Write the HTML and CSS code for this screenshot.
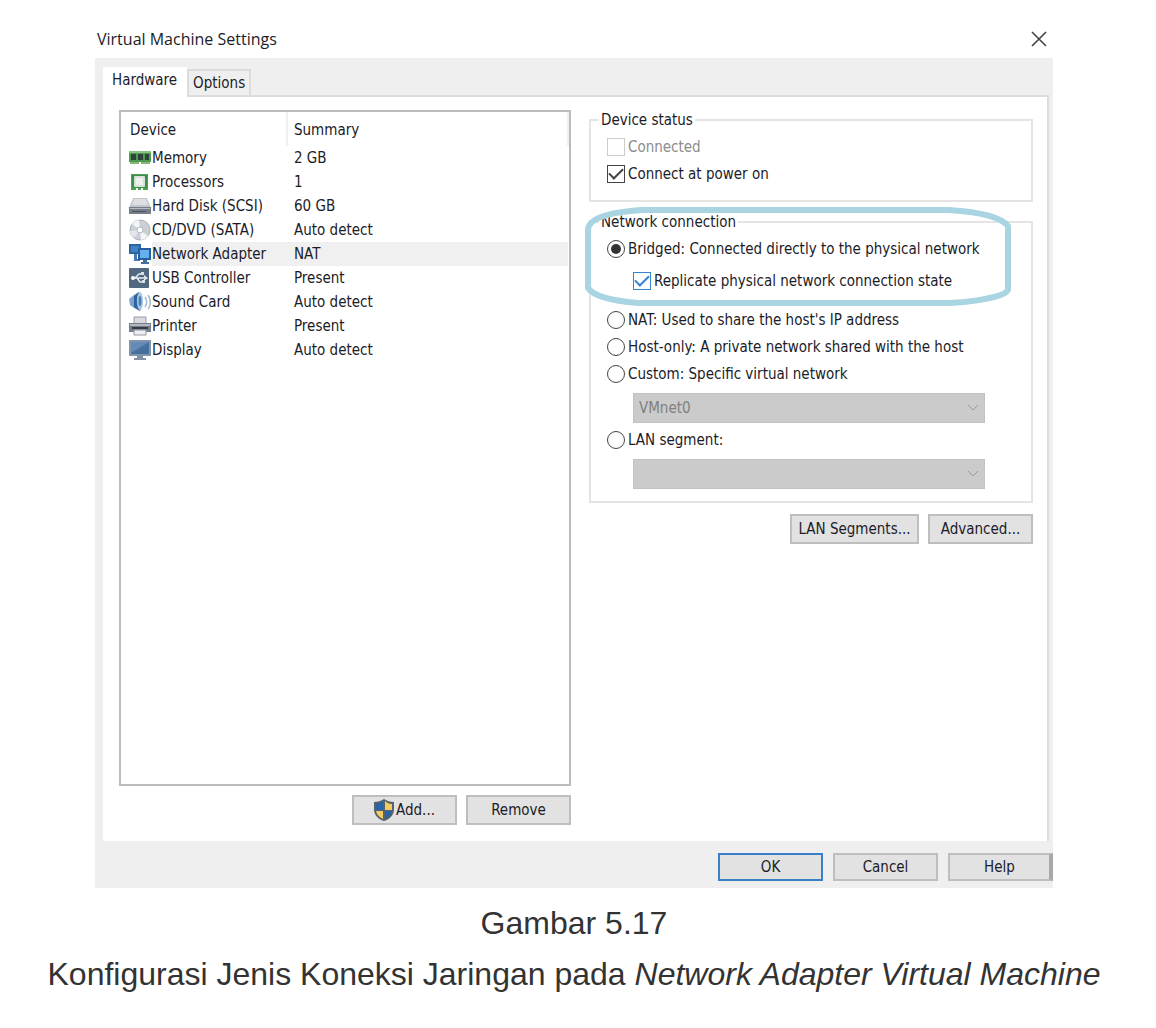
FILE: index.html
```html
<!DOCTYPE html>
<html lang="id">
<head>
<meta charset="utf-8">
<title>Gambar 5.17</title>
<link rel="stylesheet" href="styles.css">
</head>
<body>
<figure class="figure">
  <section class="dialog" aria-labelledby="dialog-title">
    <header class="titlebar">
      <h1 class="title" id="dialog-title">Virtual Machine Settings</h1>
      <button class="close" type="button" aria-label="Close">
        <svg width="16" height="16" viewBox="0 0 16 16"><path d="M1 1 15 15M15 1 1 15" stroke="#444" stroke-width="1.6" fill="none"/></svg>
      </button>
    </header>
    <div class="frame">
      <div class="tabs" role="tablist">
        <button class="tab tab-active" type="button" role="tab" aria-selected="true">Hardware</button>
        <button class="tab" type="button" role="tab" aria-selected="false">Options</button>
      </div>
      <div class="pane">
        <div class="column">
          <div class="listbox">
            <table class="devices">
              <thead>
                <tr><th class="col-device" scope="col">Device</th><th scope="col">Summary</th></tr>
              </thead>
              <tbody>
                <tr><td><span class="device"><svg class="icon" viewBox="0 0 22 22"><path d="M0 4h22v11H0z" fill="#4d9a50"/><path d="M0 4h22v2H0z" fill="#86c486"/><path d="M2 7h5v6H2zM9 7h5v6H9zM16 7h4v6h-4z" fill="#30433a"/><path d="M1 15h9v2H1zM12 15h9v2h-9z" fill="#88b578"/></svg><span class="name">Memory</span></span></td><td>2 GB</td></tr>
                <tr><td><span class="device"><svg class="icon" viewBox="0 0 22 22"><path d="M2 3h17v16h-5v-2h-2v2H9v-2H7v2H2z" fill="#4ca552"/><path d="M3 4h15v13H3z" fill="#3d8e48"/><rect x="5" y="5" width="11" height="11" rx="1" fill="#d9e2da"/><path d="M7 7h7v7H7z" fill="#eef3ee"/></svg><span class="name">Processors</span></span></td><td>1</td></tr>
                <tr><td><span class="device"><svg class="icon" viewBox="0 0 22 22"><path d="M4 3h14l4 10H0z" fill="#c3c6cb"/><path d="M5 4h12l2 6H3z" fill="#dddfe2"/><path d="M0 12h22v7H0z" fill="#747d88"/><path d="M1 13h20v1H1z" fill="#b7bdc5"/><path d="M3 16h14v1H3z" fill="#4c5561"/></svg><span class="name">Hard Disk (SCSI)</span></span></td><td>60 GB</td></tr>
                <tr><td><span class="device"><svg class="icon" viewBox="0 0 22 22"><circle cx="11" cy="11" r="10" fill="#cbd0d7" stroke="#aab0b9"/><path d="M11 11 3 5a10 10 0 0 1 7-4zM11 11l8 6a10 10 0 0 1-7 4z" fill="#f4f5f7"/><path d="M11 11 1 12a10 10 0 0 0 4 7z" fill="#e4e7ec"/><circle cx="11" cy="11" r="3" fill="#fff" stroke="#aeb8c4"/></svg><span class="name">CD/DVD (SATA)</span></span></td><td>Auto detect</td></tr>
                <tr class="selected"><td><span class="device"><svg class="icon" viewBox="0 0 22 22"><path d="M0 1h12v10H0z" fill="#2d65a3"/><path d="M2 3h8v6H2z" fill="#3e83c4"/><path d="M5 11h3v5h3v2H5z" fill="#447ab0"/><rect x="9" y="5" width="13" height="12" fill="#265e9f"/><path d="M11 7h9v8h-9z" fill="#65b0ec"/><path d="M14 17h4v2h2v2h-8v-2h2z" fill="#456f9d"/></svg><span class="name">Network Adapter</span></span></td><td>NAT</td></tr>
                <tr><td><span class="device"><svg class="icon" viewBox="0 0 22 22"><rect x="0" y="1" width="20" height="20" rx="1" fill="#51687f"/><path d="M3 11h13M6 11l4-4h3M8 11l3 4h3" fill="none" stroke="#e5ebf0" stroke-width="1.5"/><circle cx="4" cy="11" r="2" fill="#fff"/><path d="M15 8l4 3-4 3zM12 5h3v3h-3zM13 13h3v3h-3z" fill="#d9e1e8"/></svg><span class="name">USB Controller</span></span></td><td>Present</td></tr>
                <tr><td><span class="device"><svg class="icon" viewBox="0 0 22 22"><path d="M0 8 5 4 10 1c4 4 5 14 1 19L5 17 1 14z" fill="#7fa3c8"/><path d="M5 5l5-4c-3 5-3 13 1 19l-6-4z" fill="#2d629f"/><ellipse cx="11" cy="10" rx="3" ry="9" fill="#a9c8e5"/><ellipse cx="11" cy="10" rx="1.500" ry="5" fill="#4d7fb3"/><path d="M16 6c2 3 2 7 0 10M19 4c3 5 3 10 0 14" stroke="#a5bad0" stroke-width="1.5" fill="none"/></svg><span class="name">Sound Card</span></span></td><td>Auto detect</td></tr>
                <tr><td><span class="device"><svg class="icon" viewBox="0 0 22 22"><path d="M5 2h12v7H5z" fill="#d8dae0" stroke="#9a9ca6"/><path d="M0 8h22v9H0z" fill="#777d8b"/><path d="M1 9h20v2H1z" fill="#b3b7c0"/><path d="M3 12h16v2H3z" fill="#343a46"/><path d="M5 15h12v5H5z" fill="#eceef2" stroke="#9396a1"/></svg><span class="name">Printer</span></span></td><td>Present</td></tr>
                <tr><td><span class="device"><svg class="icon" viewBox="0 0 22 22"><path d="M0 1h22v16H0z" fill="#8095ae"/><path d="M2 3h18v12H2z" fill="#466f9e"/><path d="M2 3h18L2 14z" fill="#658bb4"/><path d="M8 17h6v2h3v2H5v-2h3z" fill="#8292a4"/></svg><span class="name">Display</span></span></td><td>Auto detect</td></tr>
              </tbody>
            </table>
          </div>
          <div class="actions">
            <button class="button" type="button"><svg class="shield" viewBox="0 0 20 22"><path d="M10 0c3 2 6 3 10 3v7c0 6-4 10-10 12C4 20 0 16 0 10V3c4 0 7-1 10-3z" fill="#55616b"/><path d="M9 2v9H2V5c3 0 5-1 7-3zM11 12h7c-1 4-3 6-7 8z" fill="#2764a8"/><path d="M11 2c2 2 4 3 7 3v6h-7zM2 12h7v8c-4-2-6-4-7-8z" fill="#f4cb62"/></svg>Add...</button>
            <button class="button" type="button">Remove</button>
          </div>
        </div>
        <div class="column">
          <fieldset class="group status">
            <legend>Device status</legend>
            <label class="option disabled"><input type="checkbox" disabled>Connected</label>
            <label class="option"><input type="checkbox" checked>Connect at power on</label>
          </fieldset>
          <fieldset class="group network">
            <legend>Network connection</legend>
            <label class="option"><input type="radio" name="net" checked>Bridged: Connected directly to the physical network</label>
            <label class="option nested"><input class="accent" type="checkbox" checked>Replicate physical network connection state</label>
            <label class="option"><input type="radio" name="net">NAT: Used to share the host's IP address</label>
            <label class="option"><input type="radio" name="net">Host-only: A private network shared with the host</label>
            <label class="option"><input type="radio" name="net">Custom: Specific virtual network</label>
            <select class="select" aria-label="Virtual network" disabled><option>VMnet0</option></select>
            <label class="option"><input type="radio" name="net">LAN segment:</label>
            <select class="select" aria-label="LAN segment name" disabled><option></option></select>
            <svg class="marker" viewBox="0 0 428 100" preserveAspectRatio="none" aria-hidden="true"><path d="M4 24C4 12 26 6 58 4H365C397 6 417 11 424 20V84C421 90 404 93 380 96L366 97H54C30 95 10 91 4 82Z" fill="none" stroke="#a9d4e2" stroke-width="6" stroke-linejoin="round"/></svg>
          </fieldset>
          <div class="actions">
            <button class="button wide" type="button">LAN Segments...</button>
            <button class="button" type="button">Advanced...</button>
          </div>
        </div>
      </div>
      <footer class="footer">
        <button class="button default" type="button">OK</button>
        <button class="button" type="button">Cancel</button>
        <button class="button edge" type="button">Help</button>
      </footer>
    </div>
  </section>
  <figcaption class="caption">Gambar 5.17<br>Konfigurasi Jenis Koneksi Jaringan pada <em>Network Adapter Virtual Machine</em></figcaption>
</figure>
</body>
</html>
```
FILE: styles.css
```css
* {
  box-sizing: border-box;
}

body {
  margin: 0 8px 0 0;
  background: #fff;
  color: #333;
  font-family: "Liberation Sans", Arial, sans-serif;
}

.figure {
  margin: 0;
  padding-top: 20px;
}

.dialog {
  margin: 0 95px;
  color: #1c1c28;
  font: 15px/20px "DejaVu Sans Condensed", Tahoma, sans-serif;
}

.dialog button,
.dialog select {
  font: inherit;
  color: inherit;
}

.titlebar {
  display: flex;
  align-items: center;
  justify-content: space-between;
  height: 38px;
  padding: 0 6px 0 2px;
}

.title {
  margin: 0;
  font: 16px/24px "Open Sans", "Segoe UI", sans-serif;
}

.close {
  display: flex;
  padding: 0;
  border: 0;
  background: none;
}

.frame {
  padding: 9px 4px 0 8px;
  background: #efefef;
}

.tabs {
  display: flex;
  align-items: flex-end;
}

.dialog .tab {
  height: 26px;
  padding: 0 4px;
  border: 2px solid #dcdcdc;
  border-bottom: 0;
  background: #efefef;
}

.dialog .tab-active {
  position: relative;
  z-index: 1;
  height: 30px;
  margin-bottom: -2px;
  padding: 0 10px 4px 9px;
  border: 0;
  background: #fff;
}

.pane {
  display: grid;
  grid-template-columns: 452fr 444fr;
  gap: 18px;
  padding: 13px 14px 16px 16px;
  border: solid #dcdcdc;
  border-width: 2px 2px 0 0;
  background: #fff;
}

.column {
  display: flex;
  flex-direction: column;
  min-width: 0;
}

.listbox {
  flex: 1;
  min-height: 676px;
  border: 2px solid #bcbcbc;
}

.devices {
  width: 100%;
  border-collapse: collapse;
  table-layout: fixed;
}

.devices th {
  height: 34px;
  padding: 2px 9px 0;
  border-right: 2px solid #f0f0f0;
  font-weight: normal;
  text-align: left;
}

.devices th + th {
  padding: 2px 6px 0;
}

.devices .col-device {
  width: 166px;
}

.devices td {
  height: 24px;
  padding: 0 0 0 8px;
}

.devices td + td {
  padding: 0 7px;
}

.device {
  display: flex;
  align-items: center;
  gap: 1px;
}

.name {
  flex: 1;
  line-height: 24px;
}

.selected .name,
.selected td + td {
  background: #f0f0f0;
}

.icon {
  width: 22px;
  height: 22px;
}

.actions {
  display: flex;
  justify-content: flex-end;
  gap: 9px;
  margin-top: 9px;
}

.button {
  display: flex;
  align-items: center;
  justify-content: center;
  width: 105px;
  height: 30px;
  padding: 0;
  border: 2px solid #bebebe;
  background: #e2e2e2;
}

.wide {
  width: 129px;
}

.shield {
  width: 20px;
  height: 22px;
  margin-right: 2px;
}

.group {
  position: relative;
  display: flex;
  flex-direction: column;
  min-width: 0;
  margin: 0;
  padding: 3px 46px 13px 16px;
  border: 2px solid #e4e4e4;
}

.group legend {
  margin-left: -8px;
  padding: 0 2px;
}

.network {
  margin-top: 10px;
  padding-bottom: 12px;
}

.option {
  display: flex;
  align-items: center;
  gap: 3px;
  height: 27px;
  white-space: nowrap;
}

.disabled {
  color: #8c8c8c;
}

.nested {
  margin: 5px 0 12px 26px;
}

.option input {
  display: grid;
  place-items: center;
  flex: none;
  width: 18px;
  height: 18px;
  margin: 0;
  border: 1px solid #444;
  background: #fff;
  appearance: none;
}

.option input:disabled {
  border-color: #ccc;
}

.option input[type="radio"] {
  border-radius: 50%;
}

.option input[type="radio"]:checked::before {
  content: "";
  width: 10px;
  height: 10px;
  border-radius: 50%;
  background: #333;
}

.option input[type="checkbox"]:checked::before {
  content: "";
  width: 12px;
  height: 6px;
  margin-bottom: 4px;
  border: solid #444;
  border-width: 0 0 2px 2px;
  rotate: -45deg;
}

.option input.accent,
.option input.accent:checked::before {
  border-color: #3584d0;
}

.select {
  height: 30px;
  margin: 6px 0 3px 26px;
  padding: 0 5px;
  border: 1px solid #c2c2c2;
  border-radius: 0;
  background: #cbcbcb url("data:image/svg+xml,%3Csvg xmlns='http://www.w3.org/2000/svg' width='12' height='8'%3E%3Cpath d='M1 1l5 5 5-5' fill='none' stroke='%23999'/%3E%3C/svg%3E") no-repeat right 5px center;
  opacity: 1;
  appearance: none;
}

.dialog .select {
  color: #808080;
}

.select:last-of-type {
  margin-bottom: 0;
}

.marker {
  position: absolute;
  top: -26px;
  left: -7px;
  width: 428px;
  height: 100px;
  pointer-events: none;
}

.network + .actions {
  margin-top: 11px;
}

.footer {
  display: flex;
  justify-content: flex-end;
  gap: 10px;
  margin-right: -4px;
  padding: 12px 0 7px;
}

.footer .button {
  height: 28px;
}

.footer .default {
  border-color: #3b80c6;
}

.footer .edge {
  border-right: 4px solid #a8a8a8;
}

.caption {
  margin-top: 10px;
  font-size: 32px;
  line-height: 51px;
  text-align: center;
}
```
